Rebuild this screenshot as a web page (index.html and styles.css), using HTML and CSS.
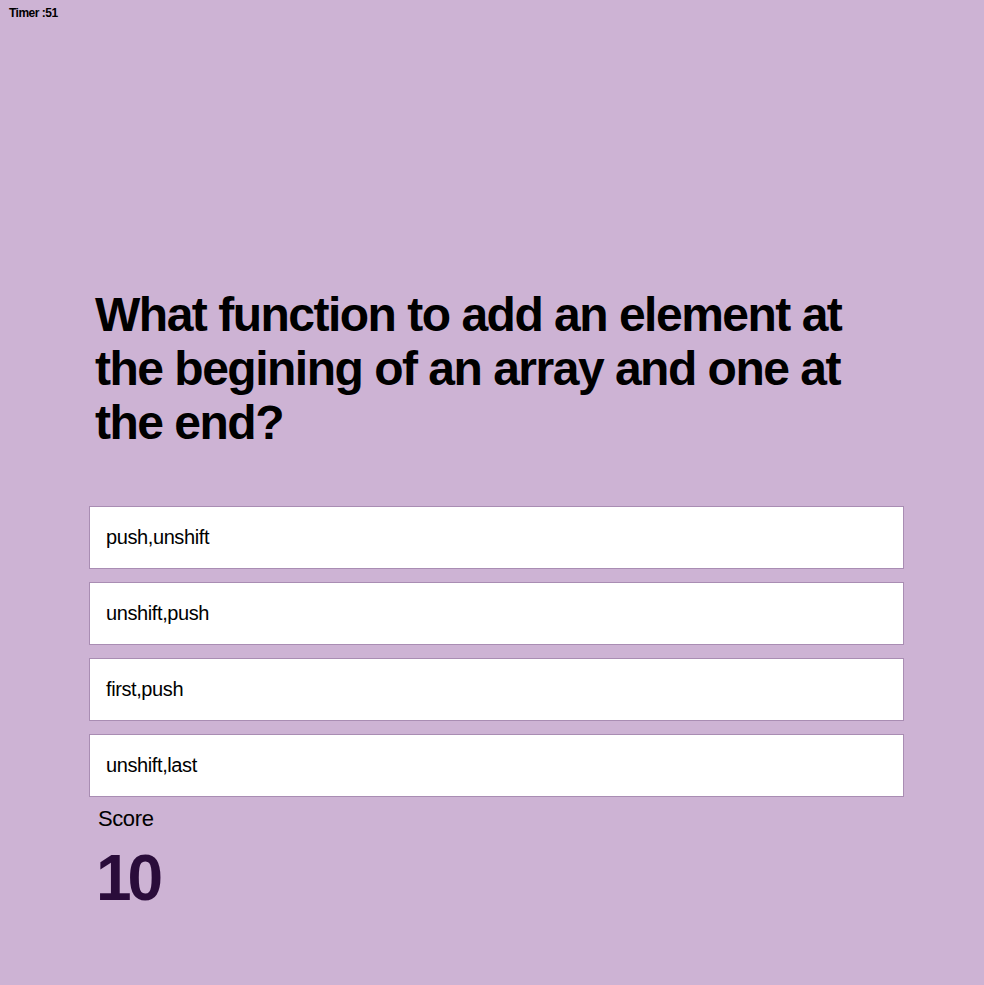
FILE: index.html
```html
<!DOCTYPE html>
<html>
<head>
<meta charset="utf-8">
<link rel="stylesheet" href="styles.css">
</head>
<body>
<div class="timer">Timer :51</div>
<main class="quiz">
  <h1 class="question">What function to add an element at the begining of an array and one at the end?</h1>
  <div class="options">
    <div class="option">push,unshift</div>
    <div class="option">unshift,push</div>
    <div class="option">first,push</div>
    <div class="option">unshift,last</div>
  </div>
  <div class="score">
    <div class="score-label">Score</div>
    <div class="score-value">10</div>
  </div>
</main>
</body>
</html>
```
FILE: styles.css
```css
html, body {
  margin: 0;
  padding: 0;
  background: #cdb3d4;
  font-family: "Liberation Sans", Arial, sans-serif;
  color: #000;
}
.timer {
  font-size: 12px;
  font-weight: bold;
  letter-spacing: -0.5px;
  padding: 6px 0 0 9px;
  height: 14px;
}
.quiz {
  margin: 0 80px 0 89px;
  padding-top: 268px;
}
.question {
  font-size: 48px;
  line-height: 54px;
  font-weight: bold;
  letter-spacing: -1.5px;
  margin: 0 0 56px 6px;
  max-width: 770px;
}
.options {
  display: flex;
  flex-direction: column;
  gap: 13px;
}
.option {
  background: #fff;
  border: 1px solid #a98db3;
  height: 61px;
  display: flex;
  align-items: center;
  padding-left: 16px;
  font-size: 20px;
  letter-spacing: -0.4px;
}
.score {
  padding-left: 9px;
}
.score-label {
  font-size: 22px;
  letter-spacing: -0.4px;
  margin-top: 9px;
}
.score-value {
  font-size: 64px;
  font-weight: bold;
  letter-spacing: -4px;
  color: #2a0c3a;
  margin-top: 9px;
  margin-left: -2px;
}
```
